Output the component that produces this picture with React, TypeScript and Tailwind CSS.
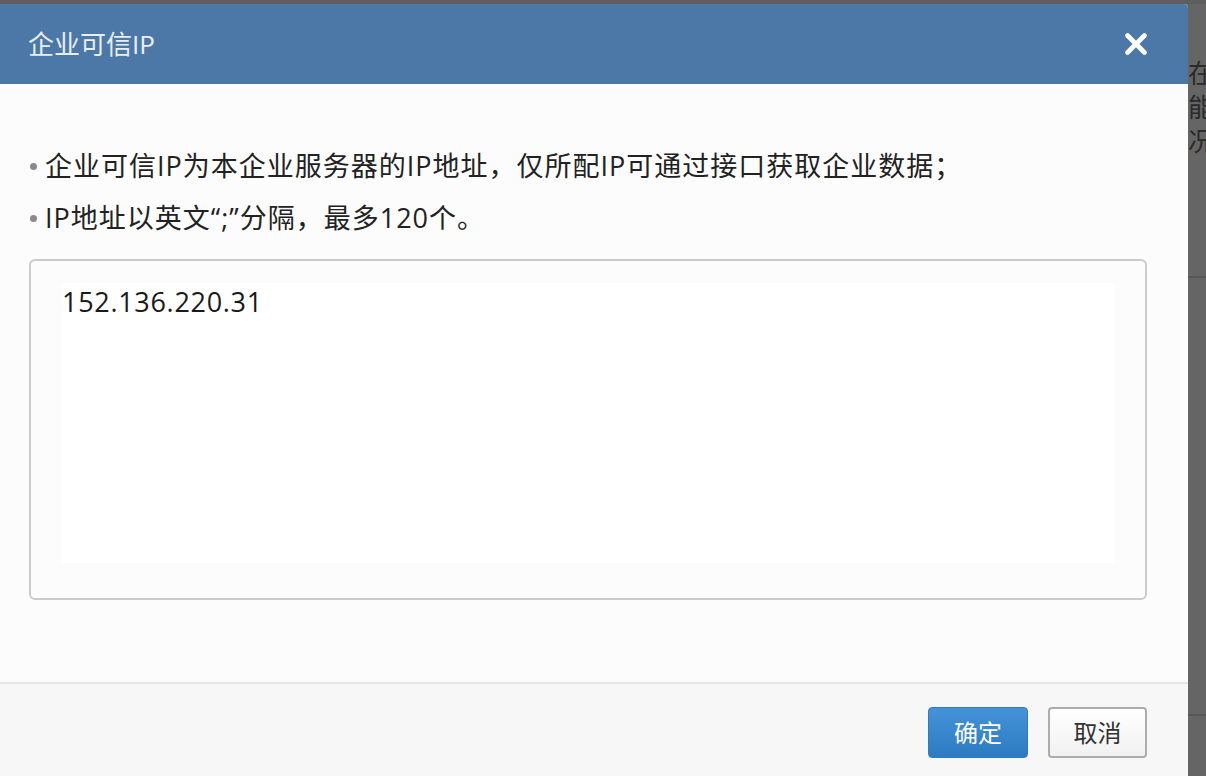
import { X } from 'lucide-react'

const font = { fontFamily: '"Open Sans", "Noto Sans CJK SC", sans-serif' }

function Backdrop() {
  return (
    <div className="flex h-full flex-col">
      <div className="h-[4px] bg-[#5e5e5e]" />
      <div className="flex flex-1 justify-end">
        <div className="flex w-[18px] flex-col">
          <div className="flex flex-col overflow-hidden pt-[52px] text-[26px] leading-[34px] text-[#2b2b2b]">
            <span className="whitespace-nowrap">在</span>
            <span className="whitespace-nowrap">能</span>
            <span className="whitespace-nowrap">况</span>
          </div>
          <div className="mt-[118px] h-[2px] bg-[#585858]" />
          <div className="mt-[436px] h-[2px] bg-[#585858]" />
        </div>
      </div>
    </div>
  )
}

export default function App() {
  return (
    <div className="relative h-[776px] w-[1206px] overflow-hidden bg-[#656565]" style={font}>
      <Backdrop />

      <div className="absolute left-0 top-[4px] flex h-[772px] w-[1188px] flex-col overflow-hidden rounded-tr-[4px] bg-[#fcfcfc]">
        <header className="flex h-[80px] shrink-0 items-center justify-between bg-[#4c78a8] pl-[28px] pr-[35px]">
          <h1 className="text-[26px] font-normal text-[#e9eef5]">企业可信IP</h1>
          <button className="text-white">
            <X className="h-[34px] w-[34px]" strokeWidth={3.3} />
          </button>
        </header>

        <div className="flex flex-1 flex-col px-[29px] pt-[56px]">
          <ul className="text-[27px] leading-[52px] tracking-[1px] text-[#222]">
            <li className="flex items-center">
              <span className="mr-[8px] ml-[1px] h-[7px] w-[7px] rounded-full bg-[#8a8a8a]" />
              企业可信IP为本企业服务器的IP地址，仅所配IP可通过接口获取企业数据；
            </li>
            <li className="flex items-center">
              <span className="mr-[8px] ml-[1px] h-[7px] w-[7px] rounded-full bg-[#8a8a8a]" />
              IP地址以英文“;”分隔，最多120个。
            </li>
          </ul>

          <div className="mt-[15px] h-[341px] w-[1118px] rounded-[6px] border-2 border-[#cbcbcb] bg-[#fcfcfc] pl-[31px] pr-[31px] pt-[22px] pb-[35px]">
            <div className="h-full bg-white text-[27px] leading-[38px] tracking-[0.7px] text-[#1a1a1a]">152.136.220.31</div>
          </div>
        </div>

        <footer className="flex h-[94px] shrink-0 items-start justify-end gap-[20px] border-t-2 border-[#e4e4ea] bg-[#f7f7f7] pr-[41px] pt-[23px]">
          <button className="h-[51px] w-[100px] rounded-[4px] border border-[#2f7bbd] bg-gradient-to-b from-[#4592da] to-[#2c7bbf] text-[24px] text-white">
            确定
          </button>
          <button className="h-[51px] w-[99px] rounded-[4px] border-2 border-[#acacac] bg-gradient-to-b from-white to-[#f1f1f1] text-[24px] text-[#333]">
            取消
          </button>
        </footer>
      </div>
    </div>
  )
}
